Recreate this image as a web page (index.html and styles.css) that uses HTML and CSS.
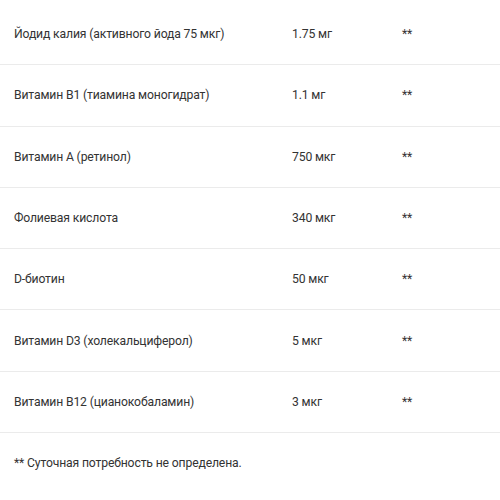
FILE: index.html
```html
<!DOCTYPE html>
<html lang="ru">
<head>
<meta charset="utf-8">
<link rel="stylesheet" href="styles.css">
</head>
<body>
<div class="table">
  <div class="row"><span class="name">Йодид калия (активного йода 75 мкг)</span><span class="amt">1.75 мг</span><span class="pct">**</span></div>
  <div class="row"><span class="name">Витамин B1 (тиамина моногидрат)</span><span class="amt">1.1 мг</span><span class="pct">**</span></div>
  <div class="row"><span class="name">Витамин A (ретинол)</span><span class="amt">750 мкг</span><span class="pct">**</span></div>
  <div class="row"><span class="name">Фолиевая кислота</span><span class="amt">340 мкг</span><span class="pct">**</span></div>
  <div class="row"><span class="name">D-биотин</span><span class="amt">50 мкг</span><span class="pct">**</span></div>
  <div class="row"><span class="name">Витамин D3 (холекальциферол)</span><span class="amt">5 мкг</span><span class="pct">**</span></div>
  <div class="row"><span class="name">Витамин B12 (цианокобаламин)</span><span class="amt">3 мкг</span><span class="pct">**</span></div>
</div>
<p class="note">** Суточная потребность не определена.</p>
</body>
</html>
```
FILE: styles.css
```css
html, body {
  margin: 0;
  padding: 0;
  background: #fff;
}
body {
  font-family: Roboto, "Noto Sans", sans-serif;
  font-size: 12.2px;
  letter-spacing: -0.15px;
  color: #333;
  padding-top: 4px;
}
.table {
  display: flex;
  flex-direction: column;
}
.row {
  display: grid;
  grid-template-columns: 278px 110px 1fr;
  align-items: center;
  height: 60.3px;
  padding-left: 14px;
  border-bottom: 1px solid #ebebeb;
}
.note {
  margin: 0;
  padding: 23px 14px 0;
}
```
